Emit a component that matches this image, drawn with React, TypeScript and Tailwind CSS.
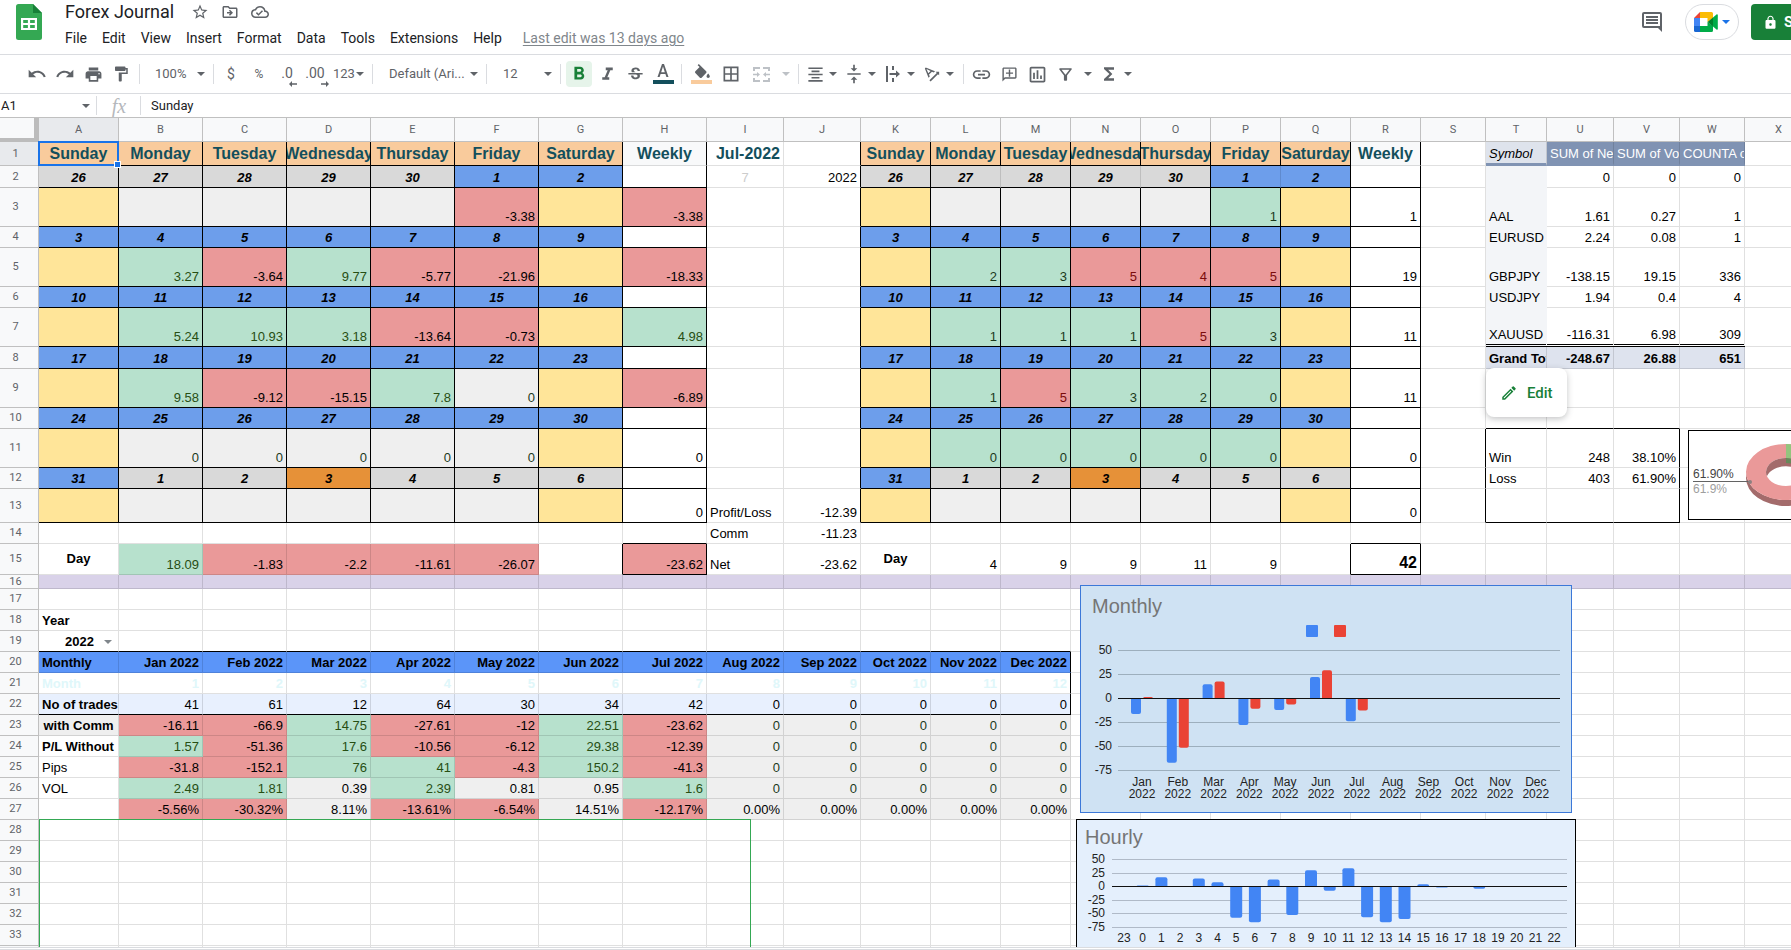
import type { ReactNode } from 'react';
import {
  MdBorderAll,
  MdFormatAlignCenter,
  MdFormatBold,
  MdFormatItalic,
  MdFormatPaint,
  MdFunctions,
  MdInsertLink,
  MdLocalPrintshop,
  MdLock,
  MdOutlineAddComment,
  MdOutlineCloudDone,
  MdOutlineDriveFileMove,
  MdOutlineFilterAlt,
  MdOutlineInsertChart,
  MdOutlineModeEdit,
  MdRedo,
  MdStarBorder,
  MdStrikethroughS,
  MdTextRotationAngleup,
  MdUndo,
  MdVerticalAlignCenter,
} from 'react-icons/md';

/* ---------- sheet data ---------- */

type Cell = { t?: string; c: string };
type Sheet = Record<string, Cell>;

const COLS: [string, string][] = [
  ['A', 'w-[80px]'], ['B', 'w-[84px]'], ['C', 'w-[84px]'], ['D', 'w-[84px]'],
  ['E', 'w-[84px]'], ['F', 'w-[84px]'], ['G', 'w-[84px]'], ['H', 'w-[84px]'],
  ['I', 'w-[77px]'], ['J', 'w-[77px]'], ['K', 'w-[70px]'], ['L', 'w-[70px]'],
  ['M', 'w-[70px]'], ['N', 'w-[70px]'], ['O', 'w-[70px]'], ['P', 'w-[70px]'],
  ['Q', 'w-[70px]'], ['R', 'w-[70px]'], ['S', 'w-[65px]'], ['T', 'w-[61px]'],
  ['U', 'w-[67px]'], ['V', 'w-[66px]'], ['W', 'w-[65px]'], ['X', 'w-auto'],
];
const LETTERS = COLS.map(([l]) => l);

const ROWS = [
  'h-[24px]', 'h-[22px]', 'h-[39px]', 'h-[21px]', 'h-[39px]', 'h-[21px]', 'h-[39px]',
  'h-[22px]', 'h-[39px]', 'h-[21px]', 'h-[39px]', 'h-[21px]', 'h-[34px]', 'h-[21px]',
  'h-[31px]', 'h-[14px]', 'h-[21px]', 'h-[21px]', 'h-[21px]', 'h-[21px]', 'h-[21px]',
  'h-[21px]', 'h-[21px]', 'h-[21px]', 'h-[21px]', 'h-[21px]', 'h-[21px]', 'h-[21px]',
  'h-[21px]', 'h-[21px]', 'h-[21px]', 'h-[21px]', 'h-[21px]', 'h-[21px]',
];

const HEAD = 'bg-[#f9cb9c] text-center text-[16px] font-bold text-[#134f5c]';
const WEEKLY = 'bg-[#f8f9fa] text-center text-[16px] font-bold text-[#134f5c]';
const DAY_BLUE = 'bg-[#6d9eeb] text-center font-bold italic text-black';
const DAY_GRAY = 'bg-[#d9d9d9] text-center font-bold italic text-black';
const DAY_NOW = 'bg-[#e69138] text-center font-bold italic text-black';
const YELLOW = 'bg-[#ffe599] text-right';
const EMPTY = 'bg-[#efefef] text-right';
const GREEN = 'bg-[#b7e1cd] text-right text-[#274e13]';
const GREEN_DARK = 'bg-[#b7e1cd] text-right text-[#1c3a1c]';
const RED = 'bg-[#ea9999] text-right text-black';
const RED_RED = 'bg-[#ea9999] text-right text-[#7a0c0c]';
const ZERO = 'bg-[#efefef] text-right text-[#1c3a1c]';
const GRAY = 'bg-[#efefef] text-right text-black';
const PLAIN = 'text-right text-black';
const LEFT = 'text-left text-black';
const BOLD_LEFT = 'text-left font-bold text-black';
const PIVOT = 'bg-[#f3f5f8] text-left text-black';

const sheet: Sheet = {};
const put = (ref: string, c: string, t?: string) => {
  sheet[ref] = { c, t };
};

const DAYS = ['Sunday', 'Monday', 'Tuesday', 'Wednesday', 'Thursday', 'Friday', 'Saturday'];
const DATES = [
  [26, 27, 28, 29, 30, 1, 2],
  [3, 4, 5, 6, 7, 8, 9],
  [10, 11, 12, 13, 14, 15, 16],
  [17, 18, 19, 20, 21, 22, 23],
  [24, 25, 26, 27, 28, 29, 30],
  [31, 1, 2, 3, 4, 5, 6],
];

const dayStyle = (week: number, i: number) => {
  if (week === 0) return i < 5 ? DAY_GRAY : DAY_BLUE;
  if (week === 5) return i === 0 ? DAY_BLUE : i === 3 ? DAY_NOW : DAY_GRAY;
  return DAY_BLUE;
};

function calendar(start: number, values: string[][], styleOf: (v: string) => string) {
  DAYS.forEach((d, i) => put(LETTERS[start + i] + 1, HEAD, d));
  DATES.forEach((week, w) => {
    week.forEach((n, i) => {
      const col = LETTERS[start + i];
      put(col + (w * 2 + 2), dayStyle(w, i), String(n));
      const weekend = i === 0 || i === 6;
      const v = weekend ? '' : values[w][i - 1];
      put(col + (w * 2 + 3), weekend ? YELLOW : v === '' ? EMPTY : styleOf(v), v);
    });
  });
}

calendar(
  0,
  [
    ['', '', '', '', '-3.38'],
    ['3.27', '-3.64', '9.77', '-5.77', '-21.96'],
    ['5.24', '10.93', '3.18', '-13.64', '-0.73'],
    ['9.58', '-9.12', '-15.15', '7.8', '0'],
    ['0', '0', '0', '0', '0'],
    ['', '', '', '', ''],
  ],
  (v) => (v === '0' ? ZERO : v.startsWith('-') ? RED : GREEN),
);
calendar(
  10,
  [
    ['', '', '', '', '1'],
    ['2', '3', '5', '4', '5'],
    ['1', '1', '1', '5', '3'],
    ['1', '5', '3', '2', '0'],
    ['0', '0', '0', '0', '0'],
    ['', '', '', '', ''],
  ],
  (v) => (Number(v) > 3 ? RED_RED : GREEN_DARK),
);

put('H1', WEEKLY, 'Weekly');
put('H3', RED, '-3.38');
put('H5', RED, '-18.33');
put('H7', GREEN, '4.98');
put('H9', RED, '-6.89');
put('H11', PLAIN, '0');
put('H13', PLAIN, '0');
put('H15', RED, '-23.62');
put('I1', 'text-right text-[16px] font-bold text-[#134f5c]', 'Jul-2022');
put('I2', 'text-center text-[#cccccc]', '7');
put('J2', PLAIN, '2022');
put('I13', LEFT, 'Profit/Loss');
put('J13', PLAIN, '-12.39');
put('I14', LEFT, 'Comm');
put('J14', PLAIN, '-11.23');
put('I15', LEFT, 'Net');
put('J15', PLAIN, '-23.62');

put('R1', WEEKLY, 'Weekly');
['1', '19', '11', '11', '0', '0'].forEach((v, i) => put('R' + (i * 2 + 3), PLAIN, v));
put('R15', 'text-right text-[16px] font-bold text-black', '42');

put('A15', 'text-center align-middle font-bold text-black', 'Day');
put('B15', GREEN, '18.09');
put('C15', RED, '-1.83');
put('D15', RED, '-2.2');
put('E15', RED, '-11.61');
put('F15', RED, '-26.07');
put('K15', 'text-center align-middle font-bold text-black', 'Day');
['4', '9', '9', '11', '9'].forEach((v, i) => put(LETTERS[11 + i] + 15, PLAIN, v));

LETTERS.forEach((l) => put(l + 16, 'bg-[#d9d2e9] text-left'));

put('T1', 'bg-[#dee3ec] text-left italic text-black', 'Symbol');
put('U1', 'bg-[#8093b3] text-left text-white', 'SUM of Net');
put('V1', 'bg-[#8093b3] text-left text-white', 'SUM of Vol');
put('W1', 'bg-[#8093b3] text-left text-white', 'COUNTA of');
const PIVOT_ROWS: [string, string, string, string][] = [
  ['', '0', '0', '0'],
  ['AAL', '1.61', '0.27', '1'],
  ['EURUSD', '2.24', '0.08', '1'],
  ['GBPJPY', '-138.15', '19.15', '336'],
  ['USDJPY', '1.94', '0.4', '4'],
  ['XAUUSD', '-116.31', '6.98', '309'],
];
PIVOT_ROWS.forEach(([s, a, b, c], i) => {
  put('T' + (i + 2), PIVOT, s);
  put('U' + (i + 2), PLAIN, a);
  put('V' + (i + 2), PLAIN, b);
  put('W' + (i + 2), PLAIN, c);
});
put('T8', 'bg-[#dee3ee] text-left font-bold text-black', 'Grand Total');
['-248.67', '26.88', '651'].forEach((v, i) =>
  put(LETTERS[20 + i] + 8, 'bg-[#dee3ee] text-right font-bold text-black', v),
);
put('T11', LEFT, 'Win');
put('U11', PLAIN, '248');
put('V11', PLAIN, '38.10%');
put('T12', LEFT, 'Loss');
put('U12', PLAIN, '403');
put('V12', PLAIN, '61.90%');

put('A18', BOLD_LEFT, 'Year');
put('A19', 'text-right font-bold text-black', '2022');
put('A20', 'bg-[#5b95f9] text-left font-bold text-black', 'Monthly');
put('A21', 'text-left font-bold text-[#e0f7fa]', 'Month');
put('A22', 'bg-[#e8f0fe] text-left font-bold text-black', 'No of trades');
put('A23', 'bg-[#efefef] text-center font-bold text-black', 'with Comm');
put('A24', BOLD_LEFT, 'P/L Without');
put('A25', LEFT, 'Pips');
put('A26', LEFT, 'VOL');

const MONTHS = ['Jan', 'Feb', 'Mar', 'Apr', 'May', 'Jun', 'Jul', 'Aug', 'Sep', 'Oct', 'Nov', 'Dec'];
const TRADES = ['41', '61', '12', '64', '30', '34', '42', '0', '0', '0', '0', '0'];
MONTHS.forEach((m, i) => {
  const l = LETTERS[i + 1];
  put(l + 20, 'bg-[#5b95f9] text-right font-bold text-black', m + ' 2022');
  put(l + 21, 'text-right font-bold text-[#e0f7fa]', String(i + 1));
  put(l + 22, 'bg-[#e8f0fe] text-right text-black', TRADES[i]);
});
const STATS: [number, string[]][] = [
  [23, ['-16.11', '-66.9', '14.75', '-27.61', '-12', '22.51', '-23.62']],
  [24, ['1.57', '-51.36', '17.6', '-10.56', '-6.12', '29.38', '-12.39']],
  [25, ['-31.8', '-152.1', '76', '41', '-4.3', '150.2', '-41.3']],
  [26, ['2.49', '1.81', '0.39', '2.39', '0.81', '0.95', '1.6']],
  [27, ['-5.56%', '-30.32%', '8.11%', '-13.61%', '-6.54%', '14.51%', '-12.17%']],
];
STATS.forEach(([row, vals]) => {
  for (let i = 0; i < 12; i++) {
    const v = vals[i] ?? (row === 27 ? '0.00%' : '0');
    let c = GREEN;
    if (v === '0') c = ZERO;
    else if (v.startsWith('-')) c = RED;
    else if (row === 27 || v.startsWith('0.')) c = GRAY;
    put(LETTERS[i + 1] + row, c, v);
  }
});

/* ---------- borders ---------- */

function rightBorder(ci: number, row: number) {
  const l = LETTERS[ci];
  if (row <= 13) {
    if (ci <= 7) return 'border-r-black';
    if (l === 'J' || l === 'R') return 'border-r-black';
    if (ci >= 10 && ci <= 16) {
      const soft = row === 2 && (l === 'L' || l === 'N' || l === 'P');
      return soft ? 'border-r-black/12' : 'border-r-black';
    }
  }
  if (row === 15 && (l === 'G' || l === 'H' || l === 'Q' || l === 'R')) return 'border-r-black';
  if (row >= 11 && row <= 13 && (l === 'S' || l === 'V')) return 'border-r-black';
  if (row >= 20 && row <= 22 && l === 'M') return 'border-r-black';
  if (row >= 2 && row <= 7 && l === 'T') return 'border-r-transparent';
  return 'border-r-black/12';
}

function bottomBorder(ci: number, row: number) {
  const l = LETTERS[ci];
  const calendarCol = ci <= 6 || (ci >= 10 && ci <= 16);
  if (row <= 13 && calendarCol) return 'border-b border-b-black';
  if (row >= 2 && row <= 13 && (l === 'H' || l === 'R')) return 'border-b border-b-black';
  if ((row === 14 || row === 15) && (l === 'H' || l === 'R')) return 'border-b border-b-black';
  if (ci >= 19 && ci <= 22) {
    if (row === 1) return 'border-b-[3px] border-b-[#8093b3]';
    if (row === 7) return 'border-b-[3px] border-double border-b-black';
  }
  if (ci >= 19 && ci <= 21 && (row === 10 || row === 13)) return 'border-b border-b-black';
  if (ci <= 12 && (row === 19 || row === 22)) return 'border-b border-b-black';
  if (row >= 2 && row <= 6 && l === 'T') return 'border-b border-b-transparent';
  return 'border-b border-b-black/12';
}

function cellPadding(c: string, row: number) {
  if (row === 16 || c.includes('align-middle')) return 'p-0';
  const centered = c.includes('text-center');
  if (c.includes('text-[16px]')) return centered ? 'p-0 pb-[3px]' : 'p-0 px-[3px] pb-[3px]';
  return centered ? 'p-0 pb-px' : 'p-0 px-[3px] pb-px';
}

/* ---------- small pieces ---------- */

const Caret = ({ className = 'text-[#5f6368]' }: { className?: string }) => (
  <svg viewBox="0 0 8 4" className={`h-1 w-2 shrink-0 ${className}`} aria-hidden="true">
    <path d="M0 0h8L4 4z" fill="currentColor" />
  </svg>
);

const Sep = () => <span className="mx-[3px] h-5 w-px shrink-0 bg-[#dadce0]" />;

const Tool = ({ label, w = 'w-[28px]', children }: { label: string; w?: string; children: ReactNode }) => (
  <button type="button" aria-label={label} className={`flex h-[26px] shrink-0 items-center justify-center ${w}`}>
    {children}
  </button>
);

const Split = ({ label, children }: { label: string; children: ReactNode }) => (
  <button type="button" aria-label={label} className="flex h-[26px] w-[39px] shrink-0 items-center gap-[3px]">
    <span className="flex w-[22px] justify-center">{children}</span>
    <Caret />
  </button>
);

const Decimals = ({ text, back }: { text: string; back?: boolean }) => (
  <span className="relative h-[18px] text-[14px] leading-4">
    {text}
    <svg viewBox="0 0 8 6" className="absolute -right-1 -bottom-1 h-1.5 w-2" aria-hidden="true">
      {back ? (
        <path d="M8 2.2H3V0L0 3l3 3V3.8h5z" fill="currentColor" />
      ) : (
        <path d="M0 2.2h5V0l3 3-3 3V3.8H0z" fill="currentColor" />
      )}
    </svg>
  </span>
);

function SheetsLogo() {
  return (
    <svg viewBox="0 0 26 36" className="mt-px h-9 w-[26px]" aria-hidden="true">
      <path d="M2.500 0H17l9 9v24.500a2.500 2.500 0 0 1-2.500 2.500h-21A2.500 2.500 0 0 1 0 33.500v-31A2.500 2.500 0 0 1 2.500 0z" fill="#34a853" />
      <path d="M17 0l9 9h-9z" fill="#188038" />
      <path d="M5 14h16v12H5zM7.200 16v3h4.700v-3zm6.900 0v3h4.700v-3zm-6.900 5v3h4.700v-3zm6.900 0v3h4.700v-3z" fill="#fff" fillRule="evenodd" />
    </svg>
  );
}

function MeetLogo() {
  return (
    <svg viewBox="0 0 24 20" className="h-5 w-6" aria-hidden="true">
      <path d="M0 6l6-6v6z" fill="#ea4335" />
      <path d="M6 0h11.500A1.500 1.500 0 0 1 19 1.500V6l-5.500 4V6H6z" fill="#fbbc04" />
      <path d="M0 6h6v8H0z" fill="#4285f4" />
      <path d="M0 14h6v6H1.500A1.500 1.500 0 0 1 0 18.500z" fill="#1967d2" />
      <path d="M6 14h7.500v-4L19 14v4.500a1.500 1.500 0 0 1-1.500 1.500H6z" fill="#00ac47" />
      <path d="M13.500 10L19 5.500v9z" fill="#00832d" />
      <path d="M19 5.500l3.500-3c.6-.5 1.300-.1 1.300.6v13.800c0 .7-.7 1.100-1.300.6L19 14.500z" fill="#00ac47" />
    </svg>
  );
}

/* ---------- charts ---------- */

const MONTHLY: [number, number][] = [
  [-16.11, 1.57], [-66.9, -51.36], [14.75, 17.6], [-27.61, -10.56], [-12, -6.12], [22.51, 29.38], [-23.62, -12.39],
];

function bar(x: number, zero: number, w: number, h: number) {
  const r = Math.min(2, Math.abs(h));
  const end = zero - h;
  const s = h > 0 ? 1 : -1;
  return `M${x} ${zero}V${end + s * r}Q${x} ${end} ${x + r} ${end}H${x + w - r}Q${x + w} ${end} ${x + w} ${end + s * r}V${zero}Z`;
}

function MonthlyChart() {
  return (
    <svg viewBox="0 0 492 228" className="h-full w-full text-[12px]" role="img" aria-label="Monthly chart">
      <text x="12" y="28" fontSize="20" fill="#757575">Monthly</text>
      <rect x="226" y="40" width="12" height="12" rx="1" fill="#4285f4" />
      <rect x="254" y="40" width="12" height="12" rx="1" fill="#ea4335" />
      {[50, 25, 0, -25, -50, -75].map((v, i) => (
        <g key={v}>
          {v !== 0 && <rect x="38" y={65 + i * 24} width="442" height="1" fill="#9dafbd" />}
          <text x="32" y={69 + i * 24} textAnchor="end" fill="#222">{v}</text>
        </g>
      ))}
      {MONTHLY.map(([a, b], i) => (
        <g key={i}>
          <path d={bar(51 + i * 35.8, 113.5, 10, a * 0.96)} fill="#4285f4" />
          <path d={bar(63 + i * 35.8, 113.5, 10, b * 0.96)} fill="#ea4335" />
        </g>
      ))}
      <rect x="38" y="113" width="442" height="1" fill="#111" />
      {MONTHS.map((m, i) => (
        <g key={m} textAnchor="middle" fill="#222">
          <text x={62 + i * 35.8} y="201">{m}</text>
          <text x={62 + i * 35.8} y="213">2022</text>
        </g>
      ))}
    </svg>
  );
}

const HOURLY = [0, 2, 17, 0, 15, 8, -58, -66, 13, -53, 30, -8, 34, -57, -66, -60, 4, -2, 0, -4, 0, 0, 0, 0];

function HourlyChart() {
  return (
    <svg viewBox="0 0 500 140" className="h-[140px] w-full text-[12px]" role="img" aria-label="Hourly chart">
      <text x="9" y="25" fontSize="20" fill="#757575">Hourly</text>
      {[50, 25, 0, -25, -50, -75].map((v, i) => (
        <g key={v}>
          {v !== 0 && <rect x="36" y={Math.round(40 + i * 13.5)} width="455" height="1" fill="#b0bac8" />}
          <text x="29" y={Math.round(44 + i * 13.5)} textAnchor="end" fill="#222">{v}</text>
        </g>
      ))}
      {HOURLY.map((v, i) =>
        v === 0 ? null : <path key={i} d={bar(42 + i * 18.7, 67.5, 12, v * 0.54)} fill="#4285f4" />,
      )}
      <rect x="36" y="67" width="455" height="1" fill="#111" />
      {HOURLY.map((_, i) => (
        <text key={i} x={48 + i * 18.7} y="123" textAnchor="middle" fill="#222">
          {(i + 23) % 24}
        </text>
      ))}
    </svg>
  );
}

function WinLossChart() {
  return (
    <svg viewBox="0 0 200 88" className="h-[88px] w-[200px] text-[12px]" role="img" aria-label="Win loss chart">
      <path d="M57 41v6a40 28 0 0 0 80 0v-6a40 28 0 0 1-80 0z" fill="#a36b6b" />
      <path d="M57 41a40 28 0 1 1 80 0a40 28 0 1 1-80 0zM77 41a20 14 0 1 0 40 0a20 14 0 1 0-40 0z" fill="#ea9999" fillRule="evenodd" />
      <path d="M77 41a20 14 0 0 1 40 0q0 3-1 4a20 14 0 0 0-38 0q-1-1-1-4z" fill="#a36b6b" />
      <path d="M97 13a40 28 0 0 1 27 48l-13-10a20 14 0 0 0-14-24z" fill="#93c47d" />
      <path d="M97 27a20 14 0 0 1 20 14q0 3-1 4a20 14 0 0 0-19-13z" fill="#67895a" />
      <text x="4" y="47" fill="#444">61.90%</text>
      <text x="4" y="62" fill="#9e9e9e">61.9%</text>
      <rect x="4" y="50" width="58" height="1" fill="#636363" />
      <circle cx="61" cy="51" r="2" fill="#8d8080" />
    </svg>
  );
}

/* ---------- page ---------- */

const MENUS = ['File', 'Edit', 'View', 'Insert', 'Format', 'Data', 'Tools', 'Extensions', 'Help'];

function Header() {
  return (
    <header className="flex h-[55px] min-w-[1853px] shrink-0 items-start border-b border-[#dadce0] pt-[3px] pl-4">
      <SheetsLogo />
      <div className="ml-[23px] flex flex-col">
        <div className="flex h-[18px] items-center text-[#5f6368]">
          <h1 className="mr-[17px] text-[18px] leading-[18px] text-[#202124]">Forex Journal</h1>
          <button type="button" aria-label="Star" className="mr-3"><MdStarBorder size={18} /></button>
          <button type="button" aria-label="Move" className="mr-3"><MdOutlineDriveFileMove size={18} /></button>
          <button type="button" aria-label="Document status"><MdOutlineCloudDone size={18} /></button>
        </div>
        <nav className="mt-[7px] flex gap-[15px] text-[14px] leading-5 whitespace-nowrap text-[#202124]">
          {MENUS.map((m) => (
            <button type="button" key={m}>{m}</button>
          ))}
          <a href="#history" className="ml-[6px] text-[#80868b] underline underline-offset-2">Last edit was 13 days ago</a>
        </nav>
      </div>
      <div className="mt-px ml-auto flex items-center">
        <button type="button" aria-label="Comments" className="mr-[23px] text-[#5f6368]">
          <svg viewBox="0 0 20 20" className="h-5 w-5" aria-hidden="true">
            <path d="M2 0h16a2 2 0 0 1 2 2v18l-4-4H2a2 2 0 0 1-2-2V2a2 2 0 0 1 2-2zm0 2v12h16V2zm2 2h12v2H4zm0 3h12v2H4zm0 3h12v2H4z" fill="currentColor" fillRule="evenodd" />
          </svg>
        </button>
        <button type="button" aria-label="Meet" className="mr-3 flex h-9 w-[54px] items-center justify-center gap-1 rounded-full border border-[#dadce0]">
          <MeetLogo />
          <Caret className="text-[#1a73e8]" />
        </button>
        <button type="button" className="flex h-9 w-[102px] items-center gap-[6px] rounded-sm bg-[#188038] pl-[12px] text-[15px] font-bold text-white">
          <MdLock size={15} />
          Share
        </button>
      </div>
    </header>
  );
}

function Toolbar() {
  return (
    <div className="flex h-[39px] shrink-0 items-center border-b border-[#dadce0] pl-[23px] text-[14px] text-[#5f6368]">
      <div className="flex pr-px">
        <Tool label="Undo"><MdUndo size={20} /></Tool>
        <Tool label="Redo"><MdRedo size={20} /></Tool>
        <Tool label="Print"><MdLocalPrintshop size={19} /></Tool>
        <Tool label="Paint format"><MdFormatPaint size={18} /></Tool>
      </div>
      <Sep />
      <button type="button" className="flex h-[26px] w-[67px] items-center justify-between pr-[5px] pl-[12px] text-[13px]">
        100%<Caret />
      </button>
      <Sep />
      <Tool label="Currency">$</Tool>
      <Tool label="Percent"><span className="text-[12px]">%</span></Tool>
      <Tool label="Decrease decimals"><Decimals text=".0" back /></Tool>
      <Tool label="Increase decimals"><Decimals text=".00" /></Tool>
      <button type="button" className="flex h-[26px] w-[40px] items-center gap-px pl-[4px] text-[13px]">
        123<Caret />
      </button>
      <Sep />
      <button type="button" className="flex h-[26px] w-[107px] items-center justify-between pr-[5px] pl-[13px] text-[13px]">
        Default (Ari...<Caret />
      </button>
      <Sep />
      <button type="button" className="flex h-[26px] w-[67px] items-center justify-between pr-[5px] pl-[13px] text-[13px]">
        12<Caret />
      </button>
      <Sep />
      <div className="flex px-px">
        <Tool label="Bold">
          <span className="flex h-[26px] w-[26px] items-center justify-center rounded-sm bg-[#e6f4ea] text-[#188038]">
            <MdFormatBold size={22} />
          </span>
        </Tool>
        <Tool label="Italic"><MdFormatItalic size={21} /></Tool>
        <Tool label="Strikethrough"><MdStrikethroughS size={19} /></Tool>
        <Tool label="Text colour">
          <span className="flex flex-col items-center">
            <svg viewBox="0 0 12 13" className="h-[13px] w-3" aria-hidden="true">
              <path d="M5 0h2l4.500 13H9.400l-1-3H3.600l-1 3H.5zm1 2.600L4.200 8.200h3.600z" fill="currentColor" fillRule="evenodd" />
            </svg>
            <span className="mt-[3px] h-1 w-[21px] bg-[#134f5c]" />
          </span>
        </Tool>
      </div>
      <Sep />
      <div className="flex px-[2px]">
        <Tool label="Fill colour" w="w-[29px]">
          <span className="flex flex-col items-center">
            <svg viewBox="2 0 19 17" className="h-[14px] w-[16px]" aria-hidden="true">
              <path d="M16.560 8.940L7.620 0 6.210 1.410l2.380 2.380-5.150 5.150c-.59.59-.59 1.540 0 2.120l5.500 5.500c.29.29.68.44 1.060.44s.77-.15 1.060-.44l5.500-5.500c.59-.58.59-1.530 0-2.120zM19 11.500s-2 2.170-2 3.500c0 1.100.9 2 2 2s2-.9 2-2c0-1.330-2-3.500-2-3.500z" fill="currentColor" />
            </svg>
            <span className="mt-[2px] h-1 w-[21px] bg-[#f9cb9c]" />
          </span>
        </Tool>
        <Tool label="Borders" w="w-[29px]"><MdBorderAll size={20} /></Tool>
        <button type="button" aria-label="Merge cells" className="flex h-[26px] w-[48px] items-center justify-between pr-[3px] pl-[8px] text-[#bdc1c6]">
          <svg viewBox="0 0 17 15" className="h-[15px] w-[17px]" aria-hidden="true">
            <path d="M0 0h7v2H2v2H0zM10 0h7v4h-2V2h-5zM0 11h2v2h5v2H0zM15 11h2v4h-7v-2h5zM0 6.700h4V5l3 2.500L4 10V8.300H0zM17 6.700h-4V5l-3 2.500 3 2.500V8.300h4z" fill="currentColor" />
          </svg>
          <Caret className="text-[#bdc1c6]" />
        </button>
      </div>
      <Sep />
      <div className="flex pl-[2px]">
        <Split label="Horizontal align"><MdFormatAlignCenter size={19} /></Split>
        <Split label="Vertical align"><MdVerticalAlignCenter size={20} /></Split>
        <Split label="Text wrapping">
          <svg viewBox="0 0 14 16" className="h-4 w-[14px]" aria-hidden="true">
            <path d="M0 0h2v16H0zM6 0h2v4H6zM6 12h2v4H6zM3.500 7H10V4.500L14 8l-4 3.500V9H3.500z" fill="currentColor" />
          </svg>
        </Split>
        <Split label="Text rotation"><MdTextRotationAngleup size={20} /></Split>
      </div>
      <Sep />
      <Tool label="Insert link"><MdInsertLink size={21} /></Tool>
      <Tool label="Insert comment"><MdOutlineAddComment size={17} className="-scale-x-100" /></Tool>
      <Tool label="Insert chart"><MdOutlineInsertChart size={21} /></Tool>
      <Tool label="Create a filter"><MdOutlineFilterAlt size={19} /></Tool>
      <span className="flex w-[18px] justify-center"><Caret /></span>
      <Tool label="Functions" w="w-[24px]"><MdFunctions size={20} /></Tool>
      <span className="flex w-[14px] justify-center"><Caret /></span>
    </div>
  );
}

function FormulaBar() {
  return (
    <div className="flex h-[23px] shrink-0 items-center text-[13px] text-[#202124]">
      <input aria-label="Name box" defaultValue="A1" className="w-[82px] pl-px outline-none" />
      <Caret />
      <span className="mr-[4px] ml-[6px] h-[19px] w-px bg-[#dadce0]" />
      <span className="w-[36px] text-center font-['Liberation_Serif',serif] text-[20px] leading-5 text-[#b5b8bc] italic">fx</span>
      <span className="mr-[10px] ml-[3px] h-[19px] w-px bg-[#dadce0]" />
      <input aria-label="Formula" defaultValue="Sunday" className="min-w-0 flex-1 outline-none" />
    </div>
  );
}

function Grid() {
  return (
    <table className="w-full min-w-[1813px] table-fixed border-separate border-spacing-0 text-[13px] leading-4">
      <colgroup>
        <col className="w-[39px]" />
        {COLS.map(([l, w]) => <col key={l} className={w} />)}
      </colgroup>
      <thead>
        <tr className="h-[24px]">
          <td className="border-r-[5px] border-b-4 border-[#bcbcbc] bg-[#f8f9fa] p-0" />
          {LETTERS.map((l) => (
            <th
              key={l}
              scope="col"
              className={`border-r border-b border-[#c0c0c0] p-0 font-['Roboto',sans-serif] text-[11px] font-normal text-[#5f6368] ${l === 'A' ? 'bg-[#e8eaed]' : 'bg-[#f8f9fa]'}`}
            >
              {l}
            </th>
          ))}
        </tr>
      </thead>
      <tbody>
        {ROWS.map((h, ri) => {
          const row = ri + 1;
          return (
            <tr key={row} className={h}>
              <th
                scope="row"
                className={`border-r border-b border-[#c0c0c0] p-0 pr-[7px] font-['Roboto',sans-serif] text-[11px] leading-[12px] font-normal text-[#5f6368] ${row === 1 ? 'bg-[#e8eaed]' : 'bg-[#f8f9fa]'}`}
              >
                {row}
              </th>
              {LETTERS.map((l, ci) => {
                const cell = sheet[l + row];
                const c = cell?.c ?? '';
                const centered = c.includes('text-center');
                const valign = c.includes('align-middle') ? '' : 'align-bottom';
                return (
                  <td
                    key={l}
                    className={`overflow-hidden border-r whitespace-nowrap ${cellPadding(c, row)} ${valign} ${rightBorder(ci, row)} ${bottomBorder(ci, row)} ${c}`}
                  >
                    {l + row === 'A19' ? (
                      <span className="flex items-center justify-end gap-[10px] pr-[3px]">
                        2022<Caret className="text-[#80868b]" />
                      </span>
                    ) : centered ? (
                      <span className="flex justify-center">{cell?.t}</span>
                    ) : (
                      cell?.t
                    )}
                  </td>
                );
              })}
            </tr>
          );
        })}
      </tbody>
    </table>
  );
}

export default function App() {
  return (
    <div className="flex h-screen flex-col overflow-hidden bg-white font-['Roboto',sans-serif]">
      <Header />
      <Toolbar />
      <FormulaBar />
      <main className="relative min-h-0 flex-1 overflow-hidden border-t border-[#c0c0c0] font-['Liberation_Sans',Arial,sans-serif]">
        <Grid />
        <div className="pointer-events-none absolute top-[23px] left-[38px] h-[25px] w-[81px] border-2 border-[#1a73e8]">
          <span className="absolute -right-1 -bottom-1 h-[7px] w-[7px] border border-white bg-[#1a73e8]" />
        </div>
        <div className="absolute top-[701px] left-[39px] h-[300px] w-[712px] border border-[#34a853]" />
        <section className="absolute top-[467px] left-[1080px] h-[228px] w-[492px] bg-[#cfe2f3] outline -outline-offset-1 outline-[#3c78d8]">
          <MonthlyChart />
        </section>
        <section className="absolute top-[701px] left-[1076px] h-[300px] w-[500px] bg-[#e4effc] outline -outline-offset-1 outline-black">
          <HourlyChart />
        </section>
        <section className="absolute top-[312px] left-[1688px] h-[90px] w-[202px] border border-black bg-white">
          <WinLossChart />
        </section>
        <button
          type="button"
          className="absolute top-[250px] left-[1486px] flex h-[49px] w-[81px] items-center gap-[9px] rounded-lg bg-white pt-px pl-[14px] font-['Roboto',sans-serif] text-[15px] font-medium text-[#188038] shadow-[0_2px_6px_rgba(60,64,67,0.3)]"
        >
          <MdOutlineModeEdit size={18} />
          Edit
        </button>
      </main>
      <footer className="h-[3px] shrink-0 border-y border-[#dadce0]" />
    </div>
  );
}
